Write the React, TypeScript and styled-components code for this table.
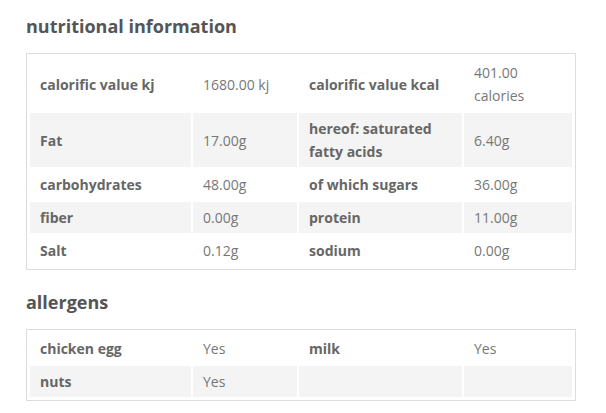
import React from "react";
import styled, { createGlobalStyle } from "styled-components";

const Global = createGlobalStyle`
  html, body { margin: 0; padding: 0; background: #fff; }
  body { font-family: "Open Sans", "Liberation Sans", sans-serif; }
`;

const Page = styled.div`
  padding: 14px 0 0 26px;
  width: 550px;
`;

const Section = styled.section`
  & + & { margin-top: 20px; }
`;

const Heading = styled.h2`
  margin: 0 0 15px;
  font-size: 18px;
  line-height: 24px;
  font-weight: 700;
  color: #555;
`;

const Box = styled.div`
  border: 1px solid #ddd;
  padding: 1px;
`;

const Table = styled.table`
  width: 100%;
  border-collapse: separate;
  border-spacing: 2px;
  table-layout: fixed;
`;

const Row = styled.tr<{ $alt: boolean }>`
  background: ${(p) => (p.$alt ? "#f4f4f4" : "#fff")};
`;

const Label = styled.th`
  text-align: left;
  font-weight: 700;
  font-size: 14px;
  line-height: 23px;
  color: #666;
  padding: 4px 10px;
  vertical-align: middle;
`;

const Value = styled.td`
  font-size: 14px;
  line-height: 23px;
  color: #777;
  padding: 4px 10px;
  vertical-align: middle;
`;

type Cell = [string, string];
const nutrition: [Cell, Cell][] = [
  [["calorific value kj", "1680.00 kj"], ["calorific value kcal", "401.00 calories"]],
  [["Fat", "17.00g"], ["hereof: saturated fatty acids", "6.40g"]],
  [["carbohydrates", "48.00g"], ["of which sugars", "36.00g"]],
  [["fiber", "0.00g"], ["protein", "11.00g"]],
  [["Salt", "0.12g"], ["sodium", "0.00g"]],
];

const allergens: [Cell, Cell][] = [
  [["chicken egg", "Yes"], ["milk", "Yes"]],
  [["nuts", "Yes"], ["", ""]],
];

function InfoTable({ rows }: { rows: [Cell, Cell][] }) {
  return (
    <Box>
      <Table>
        <colgroup>
          <col style={{ width: 161 }} />
          <col style={{ width: 104 }} />
          <col style={{ width: 163 }} />
          <col />
        </colgroup>
        <tbody>
          {rows.map((r, i) => (
            <Row key={i} $alt={i % 2 === 1}>
              <Label>{r[0][0]}</Label>
              <Value>{r[0][1]}</Value>
              <Label>{r[1][0]}</Label>
              <Value>{r[1][1]}</Value>
            </Row>
          ))}
        </tbody>
      </Table>
    </Box>
  );
}

export default function App() {
  return (
    <Page>
      <Global />
      <Section>
        <Heading>nutritional information</Heading>
        <InfoTable rows={nutrition} />
      </Section>
      <Section>
        <Heading>allergens</Heading>
        <InfoTable rows={allergens} />
      </Section>
    </Page>
  );
}
